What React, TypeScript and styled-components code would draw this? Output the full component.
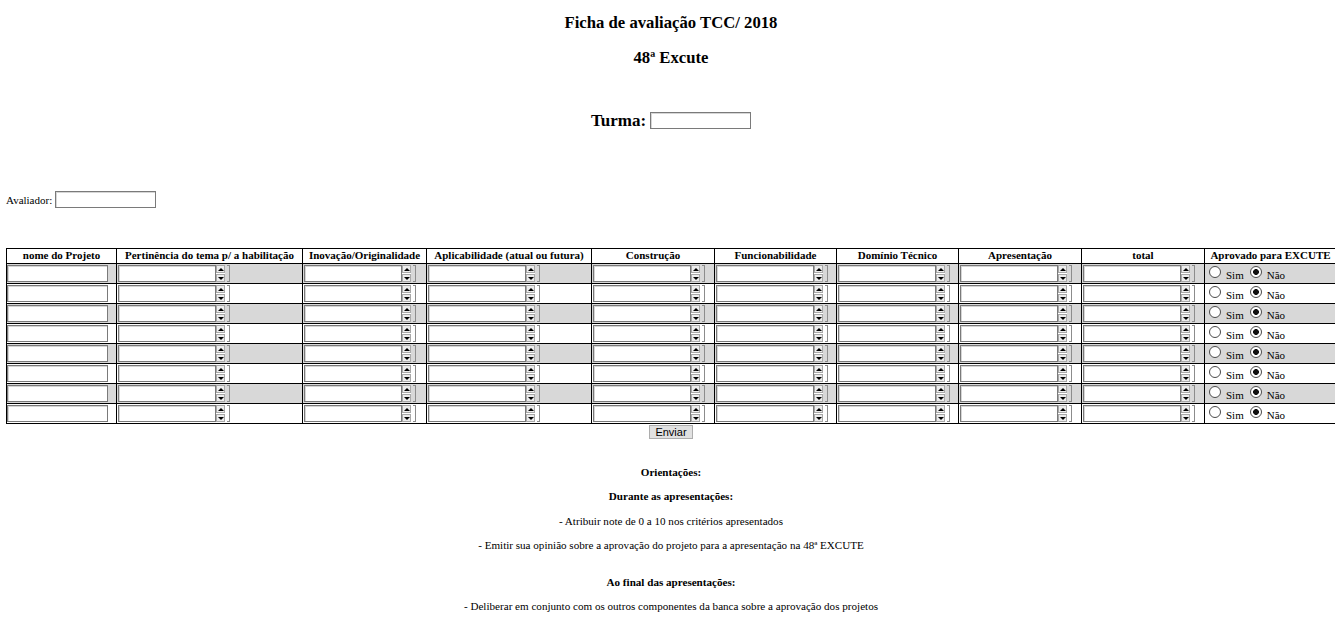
import React from "react";
import styled, { createGlobalStyle } from "styled-components";

const Global = createGlobalStyle`
  html, body {
    margin: 0;
    padding: 0;
    overflow: hidden;
    background: #fff;
  }
  body {
    font-family: "Liberation Serif", "Times New Roman", serif;
    color: #000;
  }
`;

const Page = styled.div`
  width: 1330px;
  padding-left: 6px;
`;

const Title = styled.div<{ $top: number }>`
  margin-top: ${(p) => p.$top}px;
  text-align: center;
  font-weight: bold;
  font-size: 16.7px;
  line-height: 18px;
`;

const TurmaRow = styled.div`
  margin-top: 45px;
  display: flex;
  justify-content: center;
  align-items: center;
  gap: 4px;
  height: 17px;
`;

const TurmaLabel = styled.span`
  font-size: 17px;
  font-weight: bold;
  margin-top: 1px;
`;

const EvaluatorRow = styled.div`
  margin-top: 62px;
  display: flex;
  align-items: center;
  gap: 3px;
  height: 17px;
`;

const EvaluatorLabel = styled.span`
  font-size: 11px;
`;

const TextField = styled.input<{ $w: number }>`
  box-sizing: border-box;
  display: block;
  width: ${(p) => p.$w}px;
  height: 17px;
  margin: 0;
  padding: 0 2px;
  border: 1px solid #7a7a7a;
  box-shadow: inset 1px 1px 0 #d6d6d6;
  background: #fff;
  font: 11px "Liberation Sans", Arial, sans-serif;
  outline: none;
  border-radius: 0;
`;

const Table = styled.table`
  margin-top: 40px;
  border-collapse: collapse;
  table-layout: fixed;
  width: 1330px;
`;

const Col = styled.col<{ $w: number }>`
  width: ${(p) => p.$w}px;
`;

const HeadCell = styled.th`
  border: 1px solid #000;
  padding: 0 0 2px;
  height: 12px;
  font-size: 11px;
  line-height: 12px;
  font-weight: bold;
  text-align: center;
  white-space: nowrap;
  overflow: hidden;
`;

const Row = styled.tr<{ $shade: boolean }>`
  background: ${(p) => (p.$shade ? "#d8d8d8" : "#ffffff")};
`;

const Cell = styled.td`
  border: 1px solid #000;
  padding: 1px 0;
  height: 17px;
  vertical-align: middle;
  white-space: nowrap;
  overflow: hidden;
`;

const SpinGroup = styled.div`
  display: flex;
  align-items: stretch;
  width: 112px;
  height: 17px;
  margin-left: 1px;
`;

const Spinner = styled.div`
  width: 9px;
  display: flex;
  flex-direction: column;
  gap: 1px;
  background: #fff;
`;

const SpinButton = styled.div`
  flex: 1;
  box-sizing: border-box;
  border: 1px solid #a8a8a8;
  background: #ececec;
  display: flex;
  align-items: center;
  justify-content: center;
`;

const Arrow = styled.span<{ $up: boolean }>`
  width: 0;
  height: 0;
  border-left: 3px solid transparent;
  border-right: 3px solid transparent;
  ${(p) =>
    p.$up ? "border-bottom: 3px solid #000;" : "border-top: 3px solid #000;"}
`;

const SpinEdge = styled.div`
  box-sizing: border-box;
  width: 3px;
  margin-left: 2px;
  border: 1px solid #8c8c8c;
  border-left: none;
`;

const RadioGroup = styled.div`
  display: flex;
  height: 17px;
  padding-left: 4px;
`;

const Radio = styled.input`
  appearance: none;
  -webkit-appearance: none;
  box-sizing: border-box;
  width: 12px;
  height: 12px;
  margin: 1px 0 0;
  border: 1px solid #4a4a4a;
  border-radius: 50%;
  background: #fff;
  align-self: flex-start;
  &:checked {
    background: radial-gradient(circle, #111 0 2.6px, #fff 3.2px);
  }
`;

const RadioText = styled.span<{ $gap: number }>`
  align-self: flex-end;
  font-size: 11px;
  line-height: 12px;
  margin: 0 ${(p) => p.$gap}px 1px 5px;
`;

const SubmitButton = styled.button`
  display: block;
  margin: 1px auto 0;
  box-sizing: border-box;
  height: 14px;
  padding: 0 5px;
  border: 1px solid #adadad;
  background: #e1e1e1;
  color: #000;
  font: 11px "Liberation Sans", Arial, sans-serif;
  line-height: 12px;
  border-radius: 0;
`;

const Note = styled.p<{ $bold?: boolean; $top: number }>`
  margin: ${(p) => p.$top}px 0 0;
  text-align: center;
  font-size: 11.1px;
  line-height: 13px;
  font-weight: ${(p) => (p.$bold ? "bold" : "normal")};
`;

const columns: { label: string; w: number }[] = [
  { label: "nome do Projeto", w: 110 },
  { label: "Pertinência do tema p/ a habilitação", w: 186 },
  { label: "Inovação/Originalidade", w: 124 },
  { label: "Aplicabilidade (atual ou futura)", w: 165 },
  { label: "Construção", w: 123 },
  { label: "Funcionabilidade", w: 122 },
  { label: "Domínio Técnico", w: 122 },
  { label: "Apresentação", w: 123 },
  { label: "total", w: 123 },
  { label: "Aprovado para EXCUTE", w: 132 },
];

const NumberField: React.FC = () => (
  <SpinGroup>
    <TextField $w={98} type="text" inputMode="numeric" />
    <Spinner>
      <SpinButton>
        <Arrow $up />
      </SpinButton>
      <SpinButton>
        <Arrow $up={false} />
      </SpinButton>
    </Spinner>
    <SpinEdge />
  </SpinGroup>
);

const rows = Array.from({ length: 8 }, (_, i) => i);

export default function App() {
  return (
    <>
      <Global />
      <Page>
        <Title $top={14}>Ficha de avaliação TCC/ 2018</Title>
        <Title $top={17}>48ª Excute</Title>
        <TurmaRow>
          <TurmaLabel>Turma:</TurmaLabel>
          <TextField $w={101} type="text" />
        </TurmaRow>
        <EvaluatorRow>
          <EvaluatorLabel>Avaliador:</EvaluatorLabel>
          <TextField $w={101} type="text" />
        </EvaluatorRow>
        <Table>
          <colgroup>
            {columns.map((c) => (
              <Col key={c.label} $w={c.w} />
            ))}
          </colgroup>
          <thead>
            <tr>
              {columns.map((c) => (
                <HeadCell key={c.label}>{c.label}</HeadCell>
              ))}
            </tr>
          </thead>
          <tbody>
            {rows.map((r) => (
              <Row key={r} $shade={r % 2 === 0}>
                <Cell>
                  <TextField $w={101} type="text" />
                </Cell>
                {Array.from({ length: 8 }, (_, k) => (
                  <Cell key={k}>
                    <NumberField />
                  </Cell>
                ))}
                <Cell>
                  <RadioGroup>
                    <Radio type="radio" name={`aprovado-${r}`} value="sim" />
                    <RadioText $gap={6}>Sim</RadioText>
                    <Radio
                      type="radio"
                      name={`aprovado-${r}`}
                      value="nao"
                      defaultChecked
                    />
                    <RadioText $gap={0}>Não</RadioText>
                  </RadioGroup>
                </Cell>
              </Row>
            ))}
          </tbody>
        </Table>
        <SubmitButton type="button">Enviar</SubmitButton>
        <Note $bold $top={27}>
          Orientações:
        </Note>
        <Note $bold $top={11.3}>
          Durante as apresentações:
        </Note>
        <Note $top={11.3}>- Atribuir note de 0 a 10 nos critérios apresentados</Note>
        <Note $top={11.3}>
          - Emitir sua opinião sobre a aprovação do projeto para a apresentação na 48ª EXCUTE
        </Note>
        <Note $bold $top={24}>
          Ao final das apresentações:
        </Note>
        <Note $top={11.3}>
          - Deliberar em conjunto com os outros componentes da banca sobre a aprovação dos projetos
        </Note>
      </Page>
    </>
  );
}
